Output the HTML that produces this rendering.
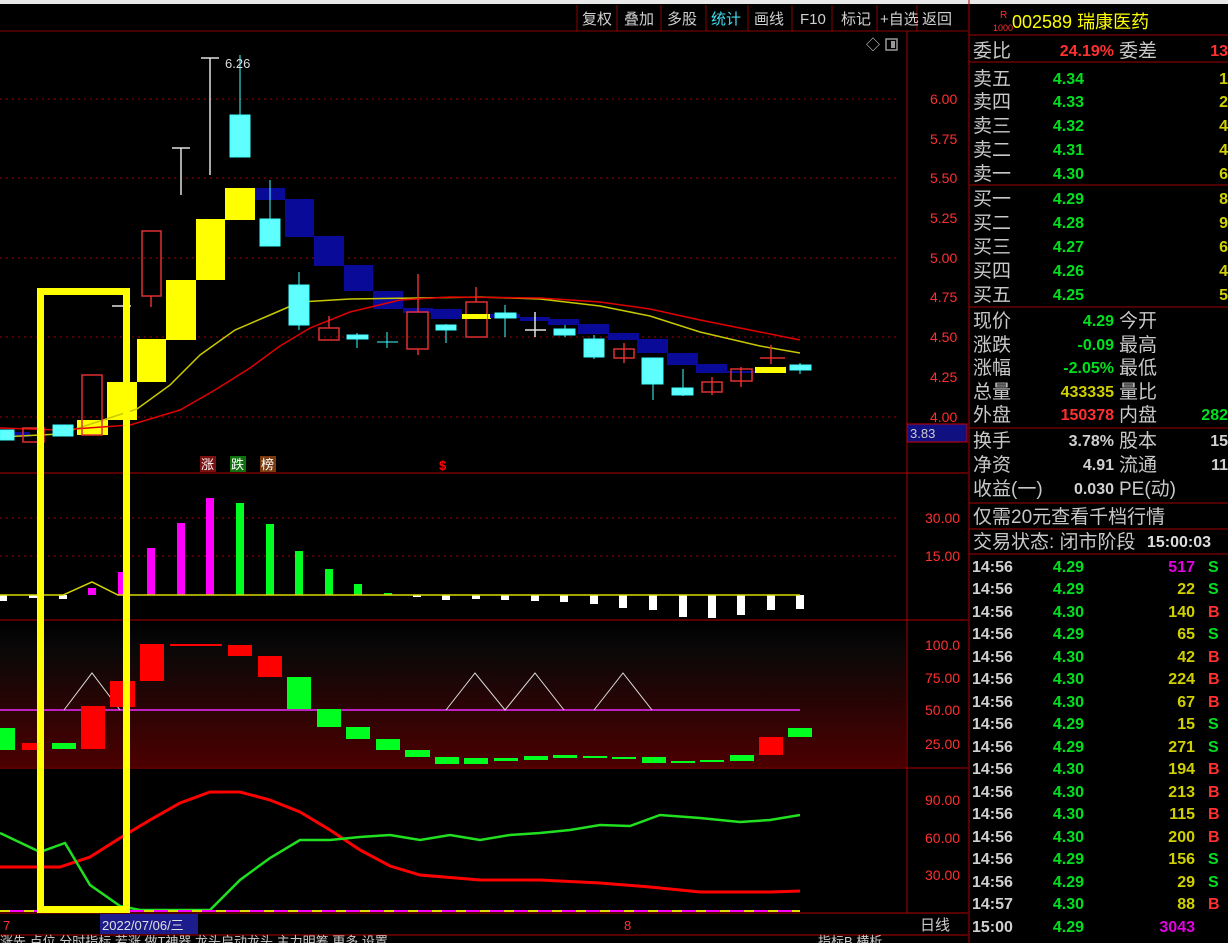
<!DOCTYPE html>
<html><head><meta charset="utf-8"><style>
html,body{margin:0;padding:0;background:#000;width:1228px;height:943px;overflow:hidden}
svg{display:block}
text{font-family:"Liberation Sans","Noto Sans CJK SC",sans-serif}
</style></head><body>
<svg width="1228" height="943" viewBox="0 0 1228 943" xmlns="http://www.w3.org/2000/svg">
<defs>
<linearGradient id="g3" x1="0" y1="0" x2="0" y2="1">
<stop offset="0" stop-color="#000"/><stop offset="0.2" stop-color="#0a0808"/><stop offset="1" stop-color="#4c0000"/>
</linearGradient>
</defs>
<rect x="0" y="0" width="1228" height="943" fill="#000"/>
<rect x="0" y="0" width="1228" height="4" fill="#e8e8e8"/>
<!-- toolbar -->
<g stroke="#8a0000" fill="none">
<line x1="0" y1="31" x2="968" y2="31"/>
<line x1="577" y1="5" x2="577" y2="31"/><line x1="617" y1="5" x2="617" y2="31"/><line x1="661" y1="5" x2="661" y2="31"/><line x1="706" y1="5" x2="706" y2="31"/><line x1="748" y1="5" x2="748" y2="31"/><line x1="792" y1="5" x2="792" y2="31"/><line x1="832" y1="5" x2="832" y2="31"/><line x1="877" y1="5" x2="877" y2="31"/><line x1="917" y1="5" x2="917" y2="31"/>
</g>
<g font-size="15" fill="#d0d0d0">
<text x="582" y="24">复权</text><text x="624" y="24">叠加</text><text x="667" y="24">多股</text><text x="711" y="24" fill="#40e0f0">统计</text><text x="754" y="24">画线</text><text x="800" y="24">F10</text><text x="841" y="24">标记</text><text x="880" y="24">+自选</text><text x="922" y="24">返回</text>
</g>
<text x="866" y="50" font-size="14" fill="#ccc">◇</text>
<rect x="886" y="39" width="11" height="11" fill="none" stroke="#999" stroke-width="1.5"/><rect x="891" y="41" width="4" height="7" fill="#999"/>
<!-- axes -->
<g stroke="#b00000">
<line x1="907" y1="31" x2="907" y2="913"/>
<line x1="969" y1="0" x2="969" y2="943"/>
<line x1="0" y1="473" x2="968" y2="473"/>
<line x1="0" y1="620" x2="968" y2="620"/>
<line x1="0" y1="768" x2="968" y2="768"/>
<line x1="0" y1="913" x2="968" y2="913"/>
<line x1="0" y1="935" x2="968" y2="935"/>
</g>
<g stroke="#a00000" stroke-dasharray="2,4">
<line x1="0" y1="99" x2="900" y2="99"/><line x1="0" y1="178" x2="900" y2="178"/><line x1="0" y1="258" x2="900" y2="258"/><line x1="0" y1="337" x2="900" y2="337"/><line x1="0" y1="417" x2="900" y2="417"/>
<line x1="0" y1="518" x2="900" y2="518"/><line x1="0" y1="556" x2="900" y2="556"/>
</g>
<g font-size="14" fill="#ff3030">
<text x="930" y="104">6.00</text><text x="930" y="144">5.75</text><text x="930" y="183">5.50</text><text x="930" y="223">5.25</text><text x="930" y="263">5.00</text><text x="930" y="302">4.75</text><text x="930" y="342">4.50</text><text x="930" y="382">4.25</text><text x="930" y="422">4.00</text>
<text x="925" y="523">30.00</text><text x="925" y="561">15.00</text>
<text x="925" y="650">100.0</text><text x="925" y="683">75.00</text><text x="925" y="715">50.00</text><text x="925" y="749">25.00</text>
<text x="925" y="805">90.00</text><text x="925" y="843">60.00</text><text x="925" y="880">30.00</text>
</g>
<rect x="907" y="424" width="60" height="18" fill="#101080" stroke="#c00" />
<text x="910" y="438" font-size="13" fill="#ccc">3.83</text>
<!-- main chart blocks -->
<g fill="#ffff00">
<rect x="77" y="420" width="31" height="15"/>
<rect x="107" y="382" width="30" height="38"/><rect x="137" y="339" width="29" height="43"/><rect x="166" y="280" width="30" height="60"/><rect x="196" y="219" width="29" height="61"/><rect x="225" y="188" width="30" height="32"/>
<rect x="462" y="314" width="29" height="5"/><rect x="755" y="367" width="31" height="6"/>
</g>
<g fill="#0a0a98">
<rect x="255" y="188" width="30" height="12"/><rect x="285" y="199" width="29" height="38"/><rect x="314" y="236" width="30" height="30"/><rect x="344" y="265" width="29" height="26"/><rect x="373" y="291" width="30" height="18"/><rect x="403" y="308" width="30" height="5"/><rect x="431" y="309" width="31" height="10"/><rect x="490" y="314" width="30" height="4"/><rect x="520" y="317" width="30" height="4"/><rect x="548" y="319" width="31" height="6"/><rect x="578" y="324" width="31" height="10"/><rect x="608" y="333" width="31" height="7"/><rect x="637" y="339" width="31" height="14"/><rect x="667" y="353" width="31" height="12"/><rect x="696" y="364" width="31" height="9"/><rect x="727" y="371" width="28" height="2"/>
<rect x="0" y="432" width="30" height="5"/>
</g>
<!-- MAs -->
<polyline fill="none" stroke="#c8c800" stroke-width="1.5" points="0,437 60,434 137,409 170,385 200,355 235,330 270,315 300,302 350,299 420,298 480,297 540,299 600,306 650,316 700,332 760,346 800,353"/>
<polyline fill="none" stroke="#e00000" stroke-width="1.5" points="0,428 60,430 130,425 180,410 215,390 250,368 280,346 310,328 350,312 400,300 450,297 540,298 600,302 650,309 700,320 760,332 800,340"/>
<!-- candles -->
<g stroke="#40ffff" fill="#60ffff">
<rect x="0" y="430" width="14" height="10"/><rect x="53" y="425" width="20" height="11"/>
<line x1="240" y1="55" x2="240" y2="115"/><rect x="230" y="115" width="20" height="42"/>
<line x1="270" y1="180" x2="270" y2="219"/><rect x="260" y="219" width="20" height="27"/>
<line x1="299" y1="272" x2="299" y2="330"/><rect x="289" y="285" width="20" height="40"/>
<line x1="357" y1="333" x2="357" y2="348"/><rect x="347" y="335" width="21" height="4"/>
<line x1="387" y1="332" x2="387" y2="348"/><line x1="377" y1="342" x2="398" y2="342"/>
<line x1="446" y1="324" x2="446" y2="343"/><rect x="436" y="325" width="20" height="5"/>
<line x1="505" y1="305" x2="505" y2="337"/><rect x="495" y="313" width="21" height="5"/>
<line x1="565" y1="325" x2="565" y2="337"/><rect x="554" y="329" width="21" height="6"/>
<line x1="594" y1="335" x2="594" y2="359"/><rect x="584" y="339" width="20" height="18"/>
<line x1="653" y1="384" x2="653" y2="400"/><rect x="642" y="358" width="21" height="26"/>
<line x1="683" y1="369" x2="683" y2="396"/><rect x="672" y="388" width="21" height="7"/>
<line x1="800" y1="363" x2="800" y2="374"/><rect x="790" y="365" width="21" height="5"/>
</g>
<g stroke="#e03030" fill="none" stroke-width="1.5">
<rect x="23" y="428" width="21" height="14"/>
<rect x="82" y="375" width="20" height="60"/>
<line x1="151" y1="296" x2="151" y2="307"/><rect x="142" y="231" width="19" height="65"/>
<line x1="329" y1="316" x2="329" y2="328"/><rect x="319" y="328" width="20" height="12"/>
<line x1="418" y1="274" x2="418" y2="312"/><line x1="418" y1="349" x2="418" y2="355"/><rect x="407" y="312" width="21" height="37"/>
<line x1="476" y1="287" x2="476" y2="302"/><rect x="466" y="302" width="21" height="35"/>
<line x1="624" y1="343" x2="624" y2="363"/><rect x="614" y="349" width="20" height="9"/>
<line x1="712" y1="377" x2="712" y2="395"/><rect x="702" y="382" width="20" height="10"/>
<line x1="741" y1="367" x2="741" y2="387"/><rect x="731" y="369" width="21" height="12"/>
<line x1="771" y1="345" x2="771" y2="364"/><line x1="760" y1="358" x2="785" y2="358"/>
</g>
<rect x="462" y="314" width="25" height="5" fill="#ffff00"/>
<g stroke="#e0e0e0" stroke-width="1.5">
<line x1="112" y1="306" x2="131" y2="306"/>
<line x1="181" y1="148" x2="181" y2="195"/><line x1="172" y1="148" x2="190" y2="148"/>
<line x1="210" y1="58" x2="210" y2="175"/><line x1="201" y1="58" x2="219" y2="58"/>
<line x1="535" y1="312" x2="535" y2="337"/><line x1="525" y1="330" x2="546" y2="330"/>
</g>
<text x="225" y="68" font-size="13" fill="#ddd">6.26</text>
<rect x="200" y="456" width="16" height="16" fill="#7a1010"/><text x="201" y="469" font-size="13" fill="#fff">涨</text>
<rect x="230" y="456" width="16" height="16" fill="#107010"/><text x="231" y="469" font-size="13" fill="#fff">跌</text>
<rect x="260" y="456" width="16" height="16" fill="#7a3a10"/><text x="261" y="469" font-size="13" fill="#fff">榜</text>
<text x="439" y="470" font-size="13" fill="#f00" font-weight="bold">$</text>
<!-- panel 2 -->
<g fill="#ff00ff">
<rect x="88" y="588" width="8" height="7"/><rect x="118" y="572" width="8" height="23"/><rect x="147" y="548" width="8" height="47"/><rect x="177" y="523" width="8" height="72"/><rect x="206" y="498" width="8" height="97"/>
</g>
<g fill="#00ff20">
<rect x="236" y="503" width="8" height="92"/><rect x="266" y="524" width="8" height="71"/><rect x="295" y="551" width="8" height="44"/><rect x="325" y="569" width="8" height="26"/><rect x="354" y="584" width="8" height="11"/><rect x="384" y="593" width="8" height="2"/>
</g>
<g fill="#fff">
<rect x="0" y="595" width="7" height="6"/><rect x="29" y="595" width="8" height="3"/><rect x="59" y="595" width="8" height="4"/><rect x="413" y="595" width="8" height="2"/><rect x="442" y="595" width="8" height="5"/><rect x="472" y="595" width="8" height="4"/><rect x="501" y="595" width="8" height="5"/><rect x="531" y="595" width="8" height="6"/><rect x="560" y="595" width="8" height="7"/><rect x="590" y="595" width="8" height="9"/><rect x="619" y="595" width="8" height="13"/><rect x="649" y="595" width="8" height="15"/><rect x="679" y="595" width="8" height="22"/><rect x="708" y="595" width="8" height="23"/><rect x="737" y="595" width="8" height="20"/><rect x="767" y="595" width="8" height="15"/><rect x="796" y="595" width="8" height="14"/>
</g>
<polyline fill="none" stroke="#d8d800" stroke-width="1.5" points="0,595 63,595 92,582 118,595 800,595"/>
<!-- panel 3 -->
<rect x="0" y="621" width="906" height="146" fill="url(#g3)"/>
<line x1="0" y1="710" x2="800" y2="710" stroke="#c020c0" stroke-width="2"/>
<g fill="none" stroke="#e0e0e0" stroke-width="1">
<polyline points="64,710 92,673 120,710"/><polyline points="446,710 475,673 505,710 535,673 564,710"/><polyline points="594,710 623,673 652,710"/>
</g>
<g fill="#ff0000">
<rect x="22" y="743" width="20" height="7"/><rect x="81" y="706" width="24" height="43"/><rect x="110" y="681" width="25" height="26"/><rect x="140" y="644" width="24" height="37"/><rect x="170" y="644" width="52" height="2"/><rect x="228" y="645" width="24" height="11"/><rect x="258" y="656" width="24" height="21"/><rect x="759" y="737" width="24" height="18"/>
</g>
<g fill="#00ff20">
<rect x="0" y="728" width="15" height="22"/><rect x="52" y="743" width="24" height="6"/><rect x="287" y="677" width="24" height="32"/><rect x="317" y="709" width="24" height="18"/><rect x="346" y="727" width="24" height="12"/><rect x="376" y="739" width="24" height="11"/><rect x="405" y="750" width="25" height="7"/><rect x="435" y="757" width="24" height="7"/><rect x="464" y="758" width="24" height="6"/><rect x="494" y="758" width="24" height="3"/><rect x="524" y="756" width="24" height="4"/><rect x="553" y="755" width="24" height="3"/><rect x="583" y="756" width="24" height="2"/><rect x="612" y="757" width="24" height="2"/><rect x="642" y="757" width="24" height="6"/><rect x="671" y="761" width="24" height="2"/><rect x="700" y="760" width="24" height="2"/><rect x="730" y="755" width="24" height="6"/><rect x="788" y="728" width="24" height="9"/>
</g>
<!-- panel 4 -->
<polyline fill="none" stroke="#ff0000" stroke-width="3" points="0,867 60,867 90,857 120,838 150,820 180,803 210,792 240,792 270,800 300,812 330,830 360,850 390,866 420,875 480,880 540,880 600,883 650,887 700,892 770,892 800,891"/>
<polyline fill="none" stroke="#20e020" stroke-width="2.5" points="0,833 40,852 65,843 90,885 120,906 140,910 210,910 240,880 270,858 300,840 330,840 360,837 390,835 420,840 450,835 480,840 510,835 540,833 570,830 600,825 630,826 660,815 700,818 740,822 770,820 800,815"/>
<line x1="0" y1="911" x2="800" y2="911" stroke="#ff00ff" stroke-width="2"/>
<line x1="0" y1="911" x2="800" y2="911" stroke="#e0e000" stroke-width="2" stroke-dasharray="10,14"/>
<!-- yellow rectangle -->
<rect x="40.5" y="291.5" width="86" height="618" fill="none" stroke="#ffff00" stroke-width="7"/>
<!-- date bar -->
<text x="3" y="930" font-size="13" fill="#ff3030">7</text>
<rect x="100" y="914" width="98" height="20" fill="#1c1c8c"/>
<text x="102" y="930" font-size="13" fill="#e0e0e0">2022/07/06/三</text>
<text x="624" y="930" font-size="13" fill="#ff3030">8</text>
<text x="920" y="930" font-size="15" fill="#ccc">日线</text>
<g font-size="13" fill="#ccc"><text x="0" y="946">涨先 点位 分时指标 若涨 做T神器 龙头启动龙头 主力明筹 更多 设置</text><text x="818" y="946">指标B 横析</text></g>
<!-- right panel -->
<g stroke="#a00000">
<line x1="969" y1="35" x2="1228" y2="35"/><line x1="969" y1="62" x2="1228" y2="62"/><line x1="969" y1="185" x2="1228" y2="185"/><line x1="969" y1="307" x2="1228" y2="307"/><line x1="969" y1="428" x2="1228" y2="428"/><line x1="969" y1="503" x2="1228" y2="503"/><line x1="969" y1="529" x2="1228" y2="529"/><line x1="969" y1="554" x2="1228" y2="554"/>
</g>
<text x="1000" y="18" font-size="10" fill="#ff3030">R</text><text x="993" y="31" font-size="9" fill="#ff3030">1000</text>
<text x="1012" y="28" font-size="18" fill="#ffff00">002589 瑞康医药</text>
<g font-size="19" fill="#c8c8c8">
<text x="973" y="57">委比</text><text x="1119" y="57">委差</text>
<text x="973" y="85">卖五</text><text x="973" y="108">卖四</text><text x="973" y="132">卖三</text><text x="973" y="156">卖二</text><text x="973" y="180">卖一</text>
<text x="973" y="205">买一</text><text x="973" y="229">买二</text><text x="973" y="253">买三</text><text x="973" y="277">买四</text><text x="973" y="301">买五</text>
<text x="973" y="327">现价</text><text x="1119" y="327">今开</text>
<text x="973" y="351">涨跌</text><text x="1119" y="351">最高</text>
<text x="973" y="374">涨幅</text><text x="1119" y="374">最低</text>
<text x="973" y="398">总量</text><text x="1119" y="398">量比</text>
<text x="973" y="421">外盘</text><text x="1119" y="421">内盘</text>
<text x="973" y="447">换手</text><text x="1119" y="447">股本</text>
<text x="973" y="471">净资</text><text x="1119" y="471">流通</text>
<text x="973" y="495">收益(一)</text><text x="1119" y="495">PE(动)</text>
<text x="973" y="523">仅需20元查看千档行情</text>
<text x="973" y="548">交易状态: 闭市阶段</text>
</g>
<text x="1147" y="547" font-size="16" fill="#ddd" font-weight="bold">15:00:03</text>
<g font-size="16" text-anchor="end" font-weight="bold">
<text x="1114" y="56" fill="#ff3030">24.19%</text><text x="1228" y="56" fill="#ff3030">13</text>
<g fill="#00e020"><text x="1084" y="84">4.34</text><text x="1084" y="107">4.33</text><text x="1084" y="131">4.32</text><text x="1084" y="155">4.31</text><text x="1084" y="179">4.30</text><text x="1084" y="204">4.29</text><text x="1084" y="228">4.28</text><text x="1084" y="252">4.27</text><text x="1084" y="276">4.26</text><text x="1084" y="300">4.25</text>
<text x="1114" y="326">4.29</text><text x="1114" y="350">-0.09</text><text x="1114" y="373">-2.05%</text><text x="1228" y="420">282</text></g>
<g fill="#d0d000"><text x="1228" y="84">1</text><text x="1228" y="107">2</text><text x="1228" y="131">4</text><text x="1228" y="155">4</text><text x="1228" y="179">6</text><text x="1228" y="204">8</text><text x="1228" y="228">9</text><text x="1228" y="252">6</text><text x="1228" y="276">4</text><text x="1228" y="300">5</text>
<text x="1114" y="397">433335</text></g>
<text x="1114" y="420" fill="#ff3030">150378</text>
<g fill="#d0d0d0"><text x="1114" y="446">3.78%</text><text x="1114" y="470">4.91</text><text x="1114" y="494">0.030</text><text x="1228" y="446">15</text><text x="1228" y="470">11</text></g>
</g>
<g font-size="16" font-weight="bold">
<g fill="#d0d0d0">
<text x="972" y="572">14:56</text><text x="972" y="594">14:56</text><text x="972" y="617">14:56</text><text x="972" y="639">14:56</text><text x="972" y="662">14:56</text><text x="972" y="684">14:56</text><text x="972" y="707">14:56</text><text x="972" y="729">14:56</text><text x="972" y="752">14:56</text><text x="972" y="774">14:56</text><text x="972" y="797">14:56</text><text x="972" y="819">14:56</text><text x="972" y="842">14:56</text><text x="972" y="864">14:56</text><text x="972" y="887">14:56</text><text x="972" y="909">14:57</text><text x="972" y="932">15:00</text>
</g>
<g fill="#00e020" text-anchor="end">
<text x="1084" y="572">4.29</text><text x="1084" y="594">4.29</text><text x="1084" y="617">4.30</text><text x="1084" y="639">4.29</text><text x="1084" y="662">4.30</text><text x="1084" y="684">4.30</text><text x="1084" y="707">4.30</text><text x="1084" y="729">4.29</text><text x="1084" y="752">4.29</text><text x="1084" y="774">4.30</text><text x="1084" y="797">4.30</text><text x="1084" y="819">4.30</text><text x="1084" y="842">4.30</text><text x="1084" y="864">4.29</text><text x="1084" y="887">4.29</text><text x="1084" y="909">4.30</text><text x="1084" y="932">4.29</text>
</g>
<g fill="#d0d000" text-anchor="end">
<text x="1195" y="572" fill="#e000e0">517</text><text x="1195" y="594">22</text><text x="1195" y="617">140</text><text x="1195" y="639">65</text><text x="1195" y="662">42</text><text x="1195" y="684">224</text><text x="1195" y="707">67</text><text x="1195" y="729">15</text><text x="1195" y="752">271</text><text x="1195" y="774">194</text><text x="1195" y="797">213</text><text x="1195" y="819">115</text><text x="1195" y="842">200</text><text x="1195" y="864">156</text><text x="1195" y="887">29</text><text x="1195" y="909">88</text><text x="1195" y="932" fill="#e000e0">3043</text>
</g>
<g>
<text x="1208" y="572" fill="#00e020">S</text><text x="1208" y="594" fill="#00e020">S</text><text x="1208" y="617" fill="#ff3030">B</text><text x="1208" y="639" fill="#00e020">S</text><text x="1208" y="662" fill="#ff3030">B</text><text x="1208" y="684" fill="#ff3030">B</text><text x="1208" y="707" fill="#ff3030">B</text><text x="1208" y="729" fill="#00e020">S</text><text x="1208" y="752" fill="#00e020">S</text><text x="1208" y="774" fill="#ff3030">B</text><text x="1208" y="797" fill="#ff3030">B</text><text x="1208" y="819" fill="#ff3030">B</text><text x="1208" y="842" fill="#ff3030">B</text><text x="1208" y="864" fill="#00e020">S</text><text x="1208" y="887" fill="#00e020">S</text><text x="1208" y="909" fill="#ff3030">B</text>
</g>
</g>
</svg>
</body></html>
